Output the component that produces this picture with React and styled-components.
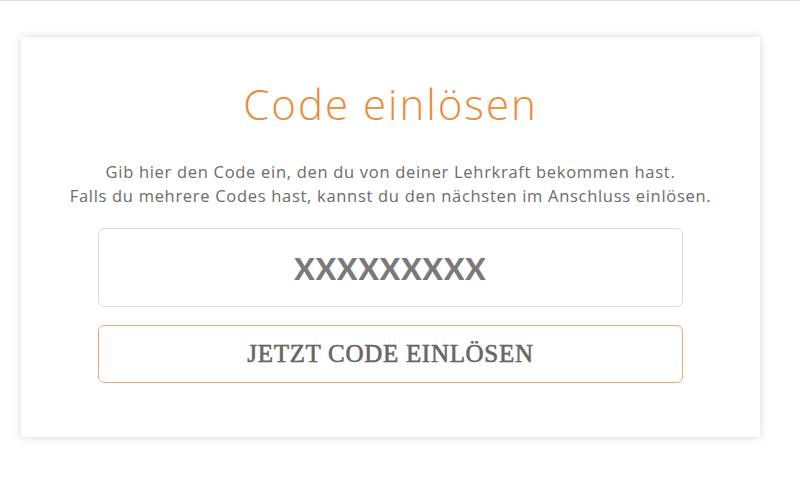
import React, { useState } from 'react';
import { styled, createGlobalStyle } from 'styled-components';

const GlobalStyle = createGlobalStyle`
  html, body {
    margin: 0;
    padding: 0;
    background: #ffffff;
  }
  body {
    font-family: 'Open Sans', 'Liberation Sans', sans-serif;
  }
`;

export default function App() {
  const [code, setCode] = useState('');

  return (
    <>
      <GlobalStyle />
      <Page>
        <Card>
          <Title>Code einlösen</Title>
          <Intro>
            Gib hier den Code ein, den du von deiner Lehrkraft bekommen hast.
            <br />
            Falls du mehrere Codes hast, kannst du den nächsten im Anschluss einlösen.
          </Intro>
          <CodeInput
            value={code}
            onChange={(e) => setCode(e.target.value)}
            placeholder="XXXXXXXXX"
          />
          <RedeemButton type="button">JETZT CODE EINLÖSEN</RedeemButton>
        </Card>
      </Page>
    </>
  );
}

const Page = styled.div`
  border-top: 1px solid #e2e2e2;
  padding: 36px 40px 44px 21px;
`;

const Card = styled.div`
  display: flex;
  flex-direction: column;
  align-items: center;
  width: 739px;
  height: 400px;
  box-sizing: border-box;
  padding: 43px 77px 0;
  background: #ffffff;
  box-shadow: 0 0 8px rgba(0, 0, 0, 0.16);
`;

const Title = styled.h1`
  margin: 0;
  font-family: 'Open Sans', sans-serif;
  font-weight: 300;
  font-size: 42px;
  line-height: 48px;
  letter-spacing: 2px;
  color: #ef8a36;
`;

const Intro = styled.p`
  margin: 32px 0 20px;
  text-align: center;
  white-space: nowrap;
  font-family: 'Open Sans', sans-serif;
  font-size: 16.5px;
  line-height: 24px;
  letter-spacing: 0.7px;
  color: #6b6b6b;
`;

const CodeInput = styled.input`
  width: 100%;
  height: 79px;
  box-sizing: border-box;
  border: 1px solid #dcdcdc;
  border-radius: 6px;
  outline: none;
  text-align: center;
  font-family: 'Lato', sans-serif;
  font-weight: 900;
  font-size: 30px;
  letter-spacing: 1px;
  color: #7a7a7a;

  &::placeholder {
    color: #7a7a7a;
    opacity: 1;
  }
`;

const RedeemButton = styled.button`
  width: 100%;
  height: 58px;
  margin-top: 18px;
  box-sizing: border-box;
  background: #ffffff;
  border: 1px solid #f5a66a;
  border-radius: 6px;
  cursor: pointer;
  font-family: 'Liberation Serif', serif;
  font-weight: 400;
  font-size: 25px;
  letter-spacing: 0.7px;
  -webkit-text-stroke: 0.6px #666666;
  color: #666666;
`;
